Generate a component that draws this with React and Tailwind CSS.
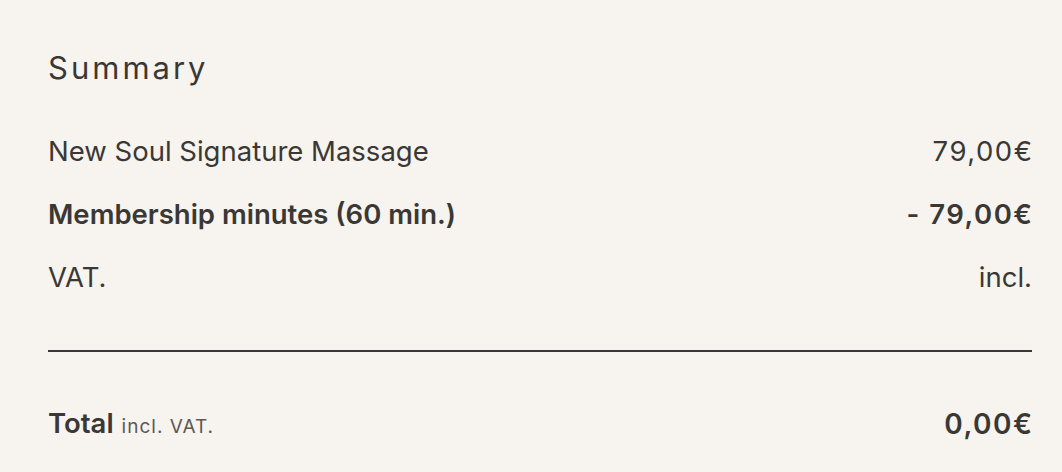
const rows = [
  { label: "New Soul Signature Massage", value: "79,00€", bold: false, amount: true },
  { label: "Membership minutes (60 min.)", value: "- 79,00€", bold: true, amount: true },
  { label: "VAT.", value: "incl.", bold: false, amount: false },
];

export default function App() {
  return (
    <div className="w-[1062px] h-[472px] overflow-hidden bg-[#f7f3ef] pl-12 pr-[30px] text-[#3a3835] font-['Inter',sans-serif]">
      <h2 className="h-[120px] pt-[48px] text-[31px] leading-[40px] font-normal tracking-[3px]">
        Summary
      </h2>

      {rows.map((row) => (
        <div
          key={row.label}
          className={`h-[63px] flex items-center justify-between text-[27.5px] ${
            row.bold ? "font-semibold" : "font-normal"
          }`}
        >
          <span>{row.label}</span>
          <span className={row.amount ? "tracking-[1.5px] -mr-[1.5px]" : ""}>
            {row.value}
          </span>
        </div>
      ))}

      <div className="mt-[41px] h-[2px] bg-[#3a3835]" />

      <div className="mt-[40px] h-[63px] flex items-center justify-between">
        <div className="flex items-baseline gap-2">
          <span className="text-[27.5px] font-semibold">Total</span>
          <span className="text-[19px] tracking-[1px] text-[#5c5955]">incl. VAT.</span>
        </div>
        <span className="text-[28px] font-semibold tracking-[1.5px] -mr-[1.5px]">0,00€</span>
      </div>
    </div>
  );
}
